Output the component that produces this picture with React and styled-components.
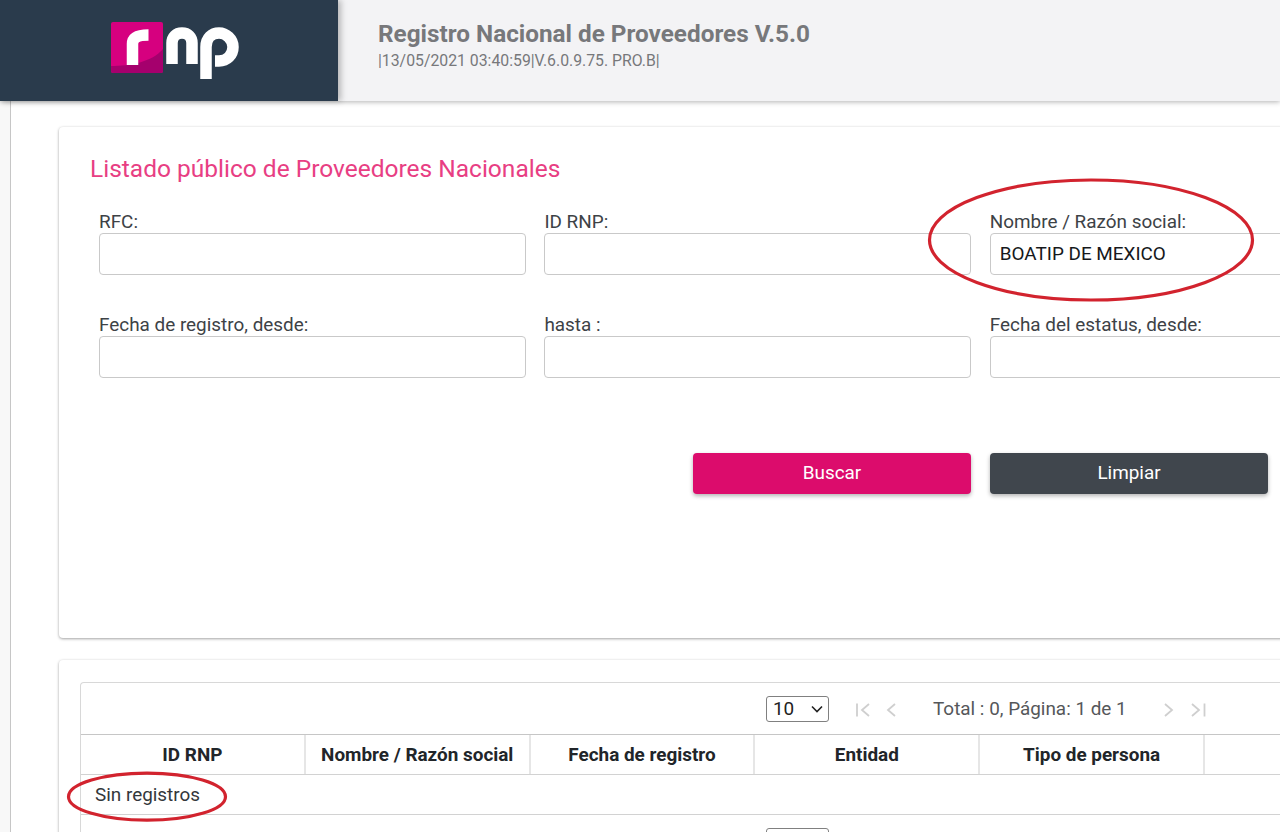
import React from "react";
import styled, { createGlobalStyle } from "styled-components";

const Global = createGlobalStyle`
  html, body { margin: 0; padding: 0; height: 100%; background: #fff; overflow: hidden; }
  body { font-family: Roboto, "Liberation Sans", sans-serif; color: #212529; }
`;
const Page = styled.div`position: relative; width: 1280px; height: 832px; overflow: hidden; display: flex; flex-direction: column; background: #fff;`;
const Header = styled.header`display: flex; height: 101px; flex: none; background: #f3f3f5; box-shadow: 0 1px 5px rgba(0,0,0,.3); position: relative; z-index: 2;`;
const Brand = styled.div`width: 338px; flex: none; background: #2a3b4c; box-shadow: 3px 0 6px rgba(0,0,0,.25); padding: 15px 0 0 100px; box-sizing: border-box;`;
const HeadText = styled.div`padding: 20px 0 0 40px;`;
const AppTitle = styled.div`font-size: 24.3px; font-weight: 700; color: #77787b; line-height: 28px;`;
const Version = styled.div`font-size: 15.8px; color: #77787b; line-height: 16px; margin-top: 5px;`;
const Body = styled.div`display: flex; flex: 1; min-height: 0;`;
const Rail = styled.div`width: 10px; flex: none; background: #f8f8f8; border-right: 1px solid #c6c6c6;`;
const Main = styled.main`flex: none; width: 1560px; padding: 26px 0 0 48px; box-sizing: border-box; display: flex; flex-direction: column; gap: 22px;`;
const Card = styled.section`flex: none; background: #fff; border-radius: 4px; box-shadow: 0 1px 3px rgba(0,0,0,.35), 0 0 3px rgba(0,0,0,.04); box-sizing: border-box;`;
const SearchCard = styled(Card)`height: 511px; padding: 26px 31px 0;`;
const Title = styled.h1`margin: 0; font-size: 24.5px; line-height: 32px; font-weight: 400; color: #e83e83;`;
const Grid = styled.div`display: grid; grid-template-columns: repeat(3, 427px); column-gap: 18.4px; row-gap: 38px; padding: 25px 0 0 9px;`;
const Field = styled.label`display: block;`;
const Label = styled.span`display: block; font-size: 18.9px; line-height: 23px; height: 23px; color: #3d4246;`;
const Input = styled.input`display: block; width: 100%; height: 42px; box-sizing: border-box; border: 1px solid #c9c9c9; border-radius: 4px; padding: 0 9px 2px; font: 400 18.9px Roboto, sans-serif; color: #16181b; background: #fff; outline: none;`;
const Actions = styled.div`display: grid; grid-template-columns: repeat(3, 278px); column-gap: 19px; padding: 75px 0 0 603px;`;
const Button = styled.button`height: 41px; border: 0; border-radius: 4px; padding: 0 0 2px; color: #fff; background: ${p => p.$dark ? "#40464d" : "#dc0c6c"}; font: 400 18.9px Roboto, sans-serif; box-shadow: 0 2px 4px rgba(0,0,0,.3);`;
const TableCard = styled(Card)`padding: 22px 21px 0; height: 300px;`;
const Table = styled.div`border: 1px solid #d8d8d8; border-radius: 4px 4px 0 0; border-bottom: 0;`;
const Toolbar = styled.div`height: 51px; display: flex; align-items: center; padding-left: 685px; font-size: 18.9px; color: #55575a;`;
const Select = styled.div`width: 63px; height: 26px; box-sizing: border-box; border: 1px solid #808080; border-radius: 3px; display: flex; align-items: center; justify-content: space-between; padding: 0 5px 0 6px; color: #222; font-size: 18.9px;`;
const Pager = styled.div`display: flex; align-items: center; color: #cfcfcf; margin: 2px 0 0 ${p => p.$m}px;`;
const Gap = styled.span`display: block; width: ${p => p.$w}px; flex: none;`;
const Total = styled.span`margin-left: 32px; width: 205px; flex: none; line-height: 1; position: relative; top: 1px;`;
const HeadRow = styled.div`display: grid; grid-template-columns: repeat(5, 224.8px) 300px; height: 41px; box-sizing: border-box; border-top: 1px solid #c6c6c6; border-bottom: 1px solid #d2d2d2;`;
const HeadCell = styled.div`display: flex; align-items: center; justify-content: center; font-size: 18.9px; font-weight: 700; color: #212529; border-right: 2px solid #e6e6e6; box-sizing: border-box;`;
const EmptyRow = styled.div`height: 40px; box-sizing: border-box; border-bottom: 1px solid #d2d2d2; display: flex; align-items: center; padding-left: 14px; font-size: 18.9px; color: #33373b;`;
const Toolbar2 = styled(Toolbar)`height: 30px; align-items: flex-start; padding-top: 13px;`;
const Annotation = styled.svg`position: absolute; left: 0; top: 0; width: 1280px; height: 832px; pointer-events: none; z-index: 3;`;

const Logo = () => (
  <svg width="140" height="70" viewBox="100 15 140 70" aria-label="rnp">
    <rect x="111" y="22" width="52" height="51" rx="2" fill="#d6007f" />
    <path d="M111 66C130 66 152 62 163 49V71a2 2 0 0 1-2 2H113a2 2 0 0 1-2-2Z" fill="#a5006d" />
    <path d="M132.5 65V44c0-6 4-9 16-9" fill="none" stroke="#fff" strokeWidth="11.5" />
    <path d="M172 64V43c0-6 4-10 10-10s10 4 10 10V64" fill="none" stroke="#fff" strokeWidth="11.5" />
    <path d="M206 79V47c0-9 6-14 13-14s14 6 14 14-6 14-14 14h-4" fill="none" stroke="#fff" strokeWidth="11.5" />
  </svg>
);
const Chevron = () => (
  <svg width="12" height="8" viewBox="0 0 12 8"><path d="M1 1.5l5 5 5-5" fill="none" stroke="#222" strokeWidth="1.6" /></svg>
);
const PageIcon = ({ d }) => (
  <svg width="18" height="18" viewBox="0 0 18 18"><path d={d} fill="none" stroke="currentColor" strokeWidth="1.8" /></svg>
);
const First = "M3 2.5v13M15 3L8 9l7 6";
const Prev = "M12 3L5 9l7 6";
const Next = "M5 3l7 6-7 6";
const Last = "M4 3l7 6-7 6M16.5 2.5v13";

const fields = [
  ["RFC:", ""], ["ID RNP:", ""], ["Nombre / Razón social:", "BOATIP DE MEXICO"],
  ["Fecha de registro, desde:", ""], ["hasta :", ""], ["Fecha del estatus, desde:", ""],
];
const heads = ["ID RNP", "Nombre / Razón social", "Fecha de registro", "Entidad", "Tipo de persona", ""];

export default function App() {
  return (
    <Page>
      <Global />
      <Header>
        <Brand><Logo /></Brand>
        <HeadText>
          <AppTitle>Registro Nacional de Proveedores V.5.0</AppTitle>
          <Version>|13/05/2021 03:40:59|V.6.0.9.75. PRO.B|</Version>
        </HeadText>
      </Header>
      <Body>
        <Rail />
        <Main>
          <SearchCard>
            <Title>Listado público de Proveedores Nacionales</Title>
            <Grid>
              {fields.map(([l, v]) => (
                <Field key={l}>
                  <Label>{l}</Label>
                  <Input defaultValue={v} readOnly />
                </Field>
              ))}
            </Grid>
            <Actions>
              <Button>Buscar</Button>
              <Button $dark>Limpiar</Button>
            </Actions>
          </SearchCard>
          <TableCard>
            <Table>
              <Toolbar>
                <Select>10<Chevron /></Select>
                <Pager $m={25}>
                  <PageIcon d={First} /><Gap $w={11} /><PageIcon d={Prev} />
                </Pager>
                <Total>Total : 0, Página: 1 de 1</Total>
                <Pager $m={22}>
                  <PageIcon d={Next} /><Gap $w={10} /><PageIcon d={Last} />
                </Pager>
              </Toolbar>
              <HeadRow>
                {heads.map((h, i) => <HeadCell key={i}>{h}</HeadCell>)}
              </HeadRow>
              <EmptyRow>Sin registros</EmptyRow>
              <Toolbar2><Select>10<Chevron /></Select></Toolbar2>
            </Table>
          </TableCard>
        </Main>
      </Body>
      <Annotation viewBox="0 0 1280 832">
        <ellipse cx="1091" cy="240" rx="161.5" ry="60" fill="none" stroke="#d2232e" strokeWidth="3.2" />
        <ellipse cx="147" cy="796.7" rx="78.5" ry="23.5" fill="none" stroke="#d2232e" strokeWidth="3.2" />
      </Annotation>
    </Page>
  );
}
